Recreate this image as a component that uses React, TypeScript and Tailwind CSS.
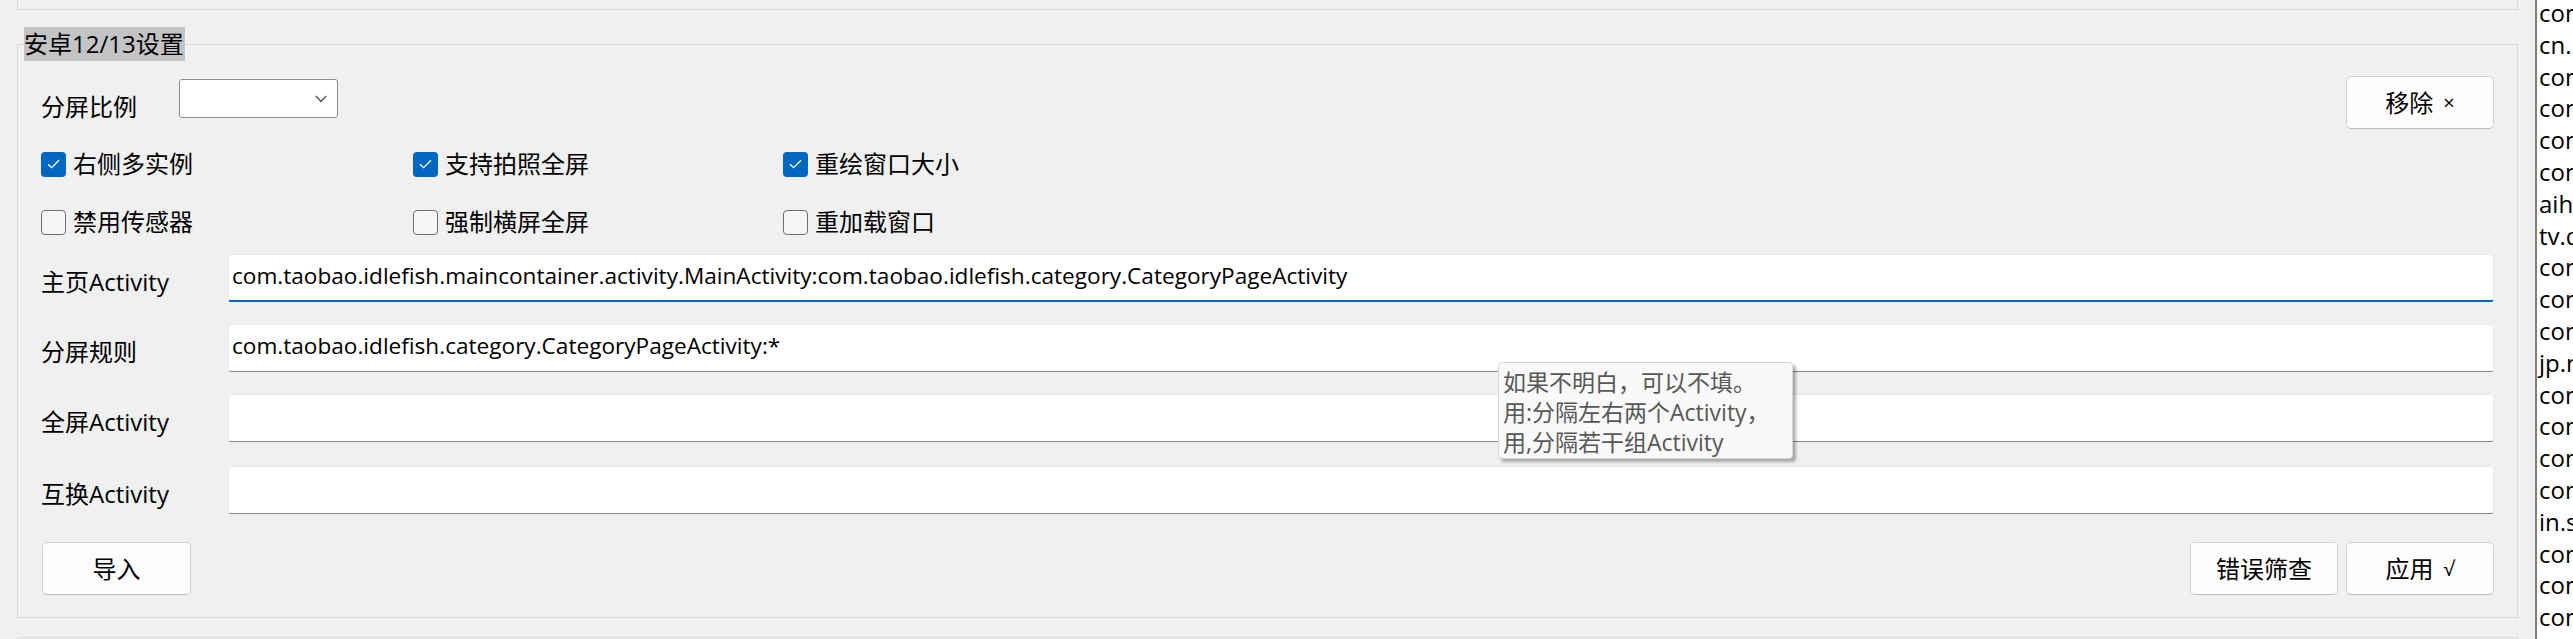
const listItems = [
  'com.tencent.mm',
  'cn.ruanyi.app',
  'com.sina.weibo',
  'com.ss.android.ugc.aweme',
  'com.xingin.xhs',
  'com.taobao.taobao',
  'aihuishou',
  'tv.danmaku.bili',
  'com.jingdong.app.mall',
  'com.eg.android.AlipayGphone',
  'com.netease.cloudmusic',
  'jp.naver.line.android',
  'com.zhihu.android',
  'com.baidu.netdisk',
  'com.taobao.idlefish',
  'com.tencent.qqmusic',
  'in.srain.cube',
  'com.dianping.v1',
  'com.sankuai.meituan',
  'com.autonavi.minimap',
];

function CheckBox({ checked, label, width }: { checked?: boolean; label: string; width: string }) {
  return (
    <div className={`flex h-[26px] items-center ${width}`}>
      {checked ? (
        <div className="flex h-[25px] w-[25px] items-center justify-center rounded-[4px] bg-[#0067c0]">
          <svg width="13" height="10" viewBox="0 0 13 10" fill="none">
            <path d="M1 5.2 L4.6 8.6 L12 1.2" stroke="white" strokeWidth="1.3" />
          </svg>
        </div>
      ) : (
        <div className="h-[25px] w-[25px] rounded-[4px] border border-[#6f6f6f] bg-[#f6f6f6]" />
      )}
      <span className="ml-[7px] leading-[26px]">{label}</span>
    </div>
  );
}

function Field({ label, value, focused, className }: { label: string; value?: string; focused?: boolean; className: string }) {
  return (
    <div className={`flex h-[48px] items-center ${className}`}>
      <span className="mt-[8px] w-[187px] shrink-0 leading-[24px]">{label}</span>
      <div
        className={
          focused
            ? 'flex h-[48px] flex-1 items-center rounded-[3px] border border-[#ececec] border-b-2 border-b-[#0067c0] bg-white px-[3px] pb-[4px]'
            : 'flex h-[48px] flex-1 items-center rounded-[3px] border border-[#ececec] border-b-[#868686] bg-white px-[3px] pb-[4px]'
        }
      >
        <span className="whitespace-nowrap text-[22.6px] leading-[30px]">{value}</span>
      </div>
    </div>
  );
}

function Button({ children, className }: { children: React.ReactNode; className: string }) {
  return (
    <button
      className={`flex h-[53px] items-center justify-center rounded-[5px] border border-[#d3d3d3] border-b-[#bdbdbd] bg-[#fdfdfd] text-[24px] leading-[30px] ${className}`}
    >
      {children}
    </button>
  );
}

export default function App() {
  return (
    <div className="relative flex h-[639px] w-[2573px] overflow-hidden bg-[#f0f0f0] font-['Open_Sans','Noto_Sans_CJK_SC',sans-serif] text-[24px] text-black">
      <div className="flex w-[2518px] shrink-0 flex-col pl-[17px]">
        <div className="h-[10px] shrink-0 border-x border-b border-[#dadada]" />

        <fieldset className="mt-[17px] h-[591px] shrink-0 border border-[#dadada]">
          <legend className="ml-[6px] bg-[#c4c4c4] pr-[1px] text-[24px] leading-[34px]">安卓12/13设置</legend>

          <div className="flex flex-col px-[23px]">
            <div className="mt-[15px] flex h-[53px] items-start">
              <span className="mt-[19px] w-[138px] leading-[24px]">分屏比例</span>
              <div className="mt-[3px] flex h-[39px] w-[159px] items-center justify-end rounded-[3px] border border-[#8c8c8c] bg-white pr-[10px]">
                <svg width="12" height="8" viewBox="0 0 12 8" fill="none">
                  <path d="M0.7 0.8 L6 6.4 L11.3 0.8" stroke="#3a3a3a" strokeWidth="1.2" />
                </svg>
              </div>
              <Button className="ml-auto w-[148px]">
                移除<span className="ml-[10px] text-[20px]">×</span>
              </Button>
            </div>

            <div className="mt-[22px] flex">
              <CheckBox checked label="右侧多实例" width="w-[372px]" />
              <CheckBox checked label="支持拍照全屏" width="w-[370px]" />
              <CheckBox checked label="重绘窗口大小" width="w-[370px]" />
            </div>
            <div className="mt-[32px] flex">
              <CheckBox label="禁用传感器" width="w-[372px]" />
              <CheckBox label="强制横屏全屏" width="w-[370px]" />
              <CheckBox label="重加载窗口" width="w-[370px]" />
            </div>

            <Field
              className="mt-[19px]"
              label="主页Activity"
              focused
              value="com.taobao.idlefish.maincontainer.activity.MainActivity:com.taobao.idlefish.category.CategoryPageActivity"
            />
            <Field className="mt-[22px]" label="分屏规则" value="com.taobao.idlefish.category.CategoryPageActivity:*" />
            <Field className="mt-[22px]" label="全屏Activity" />
            <Field className="mt-[24px]" label="互换Activity" />

            <div className="mt-[28px] flex">
              <Button className="ml-[1px] w-[149px]">导入</Button>
              <Button className="ml-auto w-[148px]">错误筛查</Button>
              <Button className="ml-[8px] w-[148px]">
                应用<span className="ml-[10px] text-[20px]">√</span>
              </Button>
            </div>
          </div>
        </fieldset>

        <div className="mt-[19px] h-[10px] shrink-0 border-x border-t border-[#dadada]" />
      </div>

      <div className="ml-[17px] flex w-[38px] shrink-0 flex-col overflow-hidden border-l-2 border-[#7f7f7f] bg-white pl-[2px]">
        <div className="-mt-[3px] flex flex-col">
          {listItems.map((item, i) => (
            <div key={i} className="whitespace-nowrap text-[24px] leading-[31.8px]">
              {item === 'aihuishou' ? (
                <>
                  aih<span className="text-[#f2b25c]">uishou</span>
                </>
              ) : (
                item
              )}
            </div>
          ))}
        </div>
      </div>

      <div className="absolute left-[1498px] top-[362px] h-[97px] w-[295px] rounded-[4px] border border-[#d6d6d6] bg-[#f9f9f9] pl-[4px] pt-[4px] text-[23px] leading-[30px] text-[#575757] shadow-[3px_3px_3px_rgba(0,0,0,0.3)]">
        <div className="whitespace-nowrap">如果不明白，可以不填。</div>
        <div className="whitespace-nowrap">用:分隔左右两个Activity，</div>
        <div className="whitespace-nowrap">用,分隔若干组Activity</div>
      </div>
    </div>
  );
}
